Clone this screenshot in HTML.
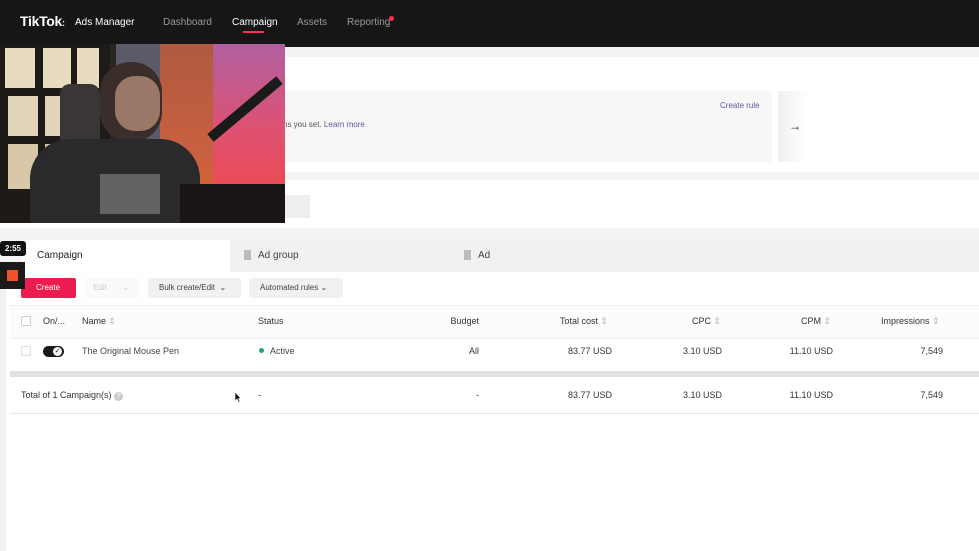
<!DOCTYPE html>
<html><head><meta charset="utf-8"><style>
*{box-sizing:border-box;margin:0;padding:0}
body{width:979px;height:551px;overflow:hidden;background:#f3f3f3;font-family:"Liberation Sans",sans-serif;position:relative;color:#222}
.a{position:absolute}
.t{position:absolute;font-size:9px;color:#333;white-space:nowrap}
.r{text-align:right}
</style></head><body>
<!-- nav -->
<div class="a" style="left:0;top:0;width:979px;height:47px;background:#161616"></div>
<div class="t" style="left:20px;top:13px;font-size:14px;font-weight:bold;color:#fff;letter-spacing:-0.3px">TikTok<span style="font-size:9px;font-weight:bold">:</span></div>
<div class="t" style="left:75px;top:17px;font-size:10px;color:#fff">Ads Manager</div>
<div class="t" style="left:163px;top:17px;font-size:10px;color:#999">Dashboard</div>
<div class="t" style="left:232px;top:17px;font-size:10px;color:#fff">Campaign</div>
<div class="a" style="left:243px;top:31px;width:21px;height:2px;background:#fe2c55"></div>
<div class="t" style="left:297px;top:17px;font-size:10px;color:#999">Assets</div>
<div class="t" style="left:347px;top:17px;font-size:10px;color:#999">Reporting</div>
<div class="a" style="left:389px;top:16px;width:5px;height:5px;border-radius:50%;background:#fe2c55"></div>

<!-- top white section -->
<div class="a" style="left:0;top:57px;width:979px;height:115px;background:#fff"></div>
<div class="a" style="left:280px;top:91px;width:492px;height:71px;background:#f7f7f8"></div>
<div class="a" style="left:778px;top:91px;width:30px;height:71px;background:linear-gradient(90deg,#f0f0f0,#fff)"></div>
<div class="t" style="left:720px;top:101px;font-size:8px;color:#5a5aa0">Create rule</div>
<div class="t" style="left:283px;top:120px;font-size:8px;color:#555">ns you set. <span style="color:#5a5aa0">Learn more</span></div>
<div class="t" style="left:789px;top:119px;font-size:12px;color:#111">→</div>
<div class="a" style="left:0;top:180px;width:979px;height:48px;background:#fff"></div>
<div class="a" style="left:280px;top:195px;width:30px;height:23px;background:#eee"></div>

<!-- tabs -->
<div class="a" style="left:230px;top:240px;width:749px;height:30px;background:#f1f1f1"></div>
<div class="a" style="left:22px;top:240px;width:208px;height:32px;background:#fff"></div>
<div class="t" style="left:37px;top:250px;font-size:10px;color:#222">Campaign</div>
<div class="a" style="left:244px;top:250px;width:7px;height:10px;background:#bbb"></div>
<div class="t" style="left:258px;top:250px;font-size:10px;color:#444">Ad group</div>
<div class="a" style="left:464px;top:250px;width:7px;height:10px;background:#bbb"></div>
<div class="t" style="left:478px;top:250px;font-size:10px;color:#444">Ad</div>

<!-- toolbar + table -->
<div class="a" style="left:6px;top:272px;width:973px;height:279px;background:#fff"></div>
<div class="a" style="left:0;top:272px;width:6px;height:279px;background:#f1f1f1"></div>
<div class="a" style="left:21px;top:278px;width:55px;height:20px;background:#ec1c4f;border-radius:2px"></div>
<div class="t" style="left:36px;top:283px;font-size:8px;color:#fff">Create</div>
<div class="a" style="left:84px;top:278px;width:56px;height:20px;background:#fafafa"></div>
<div class="t" style="left:93px;top:283px;font-size:8px;color:#ccc">Edit &nbsp;&nbsp;&nbsp;&nbsp;&nbsp;&nbsp;⌄</div>
<div class="a" style="left:148px;top:278px;width:93px;height:20px;background:#f1f1f1;border-radius:2px"></div>
<div class="t" style="left:159px;top:283px;font-size:8px;color:#444">Bulk create/Edit &nbsp;⌄</div>
<div class="a" style="left:249px;top:278px;width:94px;height:20px;background:#f1f1f1;border-radius:2px"></div>
<div class="t" style="left:260px;top:283px;font-size:8px;color:#444">Automated rules ⌄</div>
<div class="a" style="left:10px;top:305px;width:969px;height:1px;background:#eee"></div>
<div class="a" style="left:10px;top:306px;width:969px;height:32px;background:#fcfcfc"></div>
<div class="a" style="left:10px;top:338px;width:969px;height:1px;background:#eee"></div>
<div class="a" style="left:21px;top:316px;width:10px;height:10px;border:1px solid #ccc;border-radius:2px;background:#fff"></div>
<div class="t" style="left:43px;top:316px;font-size:9px">On/...</div>
<div class="t" style="left:82px;top:316px;font-size:9px">Name <span style="color:#bbb">⇕</span></div>
<div class="t" style="left:258px;top:316px;font-size:9px">Status</div>
<div class="t r" style="left:400px;width:79px;top:316px;font-size:9px">Budget</div>
<div class="t" style="left:560px;top:316px;font-size:9px">Total cost <span style="color:#bbb">⇕</span></div>
<div class="t" style="left:692px;top:316px;font-size:9px">CPC <span style="color:#bbb">⇕</span></div>
<div class="t" style="left:801px;top:316px;font-size:9px">CPM <span style="color:#bbb">⇕</span></div>
<div class="t" style="left:881px;top:316px;font-size:9px">Impressions <span style="color:#bbb">⇕</span></div>

<div class="a" style="left:21px;top:346px;width:10px;height:10px;border:1px solid #ddd;border-radius:2px"></div>
<div class="a" style="left:43px;top:346px;width:21px;height:11px;border-radius:6px;background:#1a1a1a"></div>
<div class="a" style="left:53px;top:347px;width:9px;height:9px;border-radius:50%;background:#fff;font-size:7px;line-height:9px;text-align:center;color:#111">✓</div>
<div class="t" style="left:82px;top:346px;font-size:9px;color:#444">The Original Mouse Pen</div>
<div class="a" style="left:259px;top:348px;width:5px;height:5px;border-radius:50%;background:#21a56b"></div>
<div class="t" style="left:270px;top:346px;font-size:9px;color:#444">Active</div>
<div class="t r" style="left:400px;width:79px;top:346px;font-size:9px">All</div>
<div class="t r" style="left:530px;width:82px;top:346px">83.77 USD</div>
<div class="t r" style="left:650px;width:72px;top:346px">3.10 USD</div>
<div class="t r" style="left:760px;width:73px;top:346px">11.10 USD</div>
<div class="t r" style="left:880px;width:63px;top:346px">7,549</div>

<div class="a" style="left:10px;top:371px;width:969px;height:6px;background:#e2e2e2"></div>
<div class="t" style="left:21px;top:390px;font-size:9px">Total of 1 Campaign(s) <span style="display:inline-block;width:9px;height:9px;border-radius:50%;background:#ccc;color:#fff;font-size:7px;text-align:center;line-height:9px">?</span></div>
<div class="t" style="left:258px;top:390px">-</div>
<div class="t r" style="left:400px;width:79px;top:390px">-</div>
<div class="t r" style="left:530px;width:82px;top:390px">83.77 USD</div>
<div class="t r" style="left:650px;width:72px;top:390px">3.10 USD</div>
<div class="t r" style="left:760px;width:73px;top:390px">11.10 USD</div>
<div class="t r" style="left:880px;width:63px;top:390px">7,549</div>
<div class="a" style="left:10px;top:413px;width:969px;height:1px;background:#e6e6e6"></div>
<svg class="a" style="left:234px;top:391px" width="8" height="12" viewBox="0 0 8 12"><path d="M1 1 L1 10 L3 8 L5 11.5 L6 11 L4.5 7.5 L7 7.5 Z" fill="#111" stroke="#fff" stroke-width="0.6"/></svg>

<!-- webcam -->
<div class="a" style="left:0;top:44px;width:285px;height:179px;overflow:hidden;background:#2a2422">
  <div class="a" style="left:0;top:0;width:110px;height:179px;background:#1e1a18"></div>
  <div class="a" style="left:5px;top:4px;width:30px;height:40px;background:#e8dcc0"></div>
  <div class="a" style="left:43px;top:4px;width:28px;height:40px;background:#e8dcc0"></div>
  <div class="a" style="left:77px;top:4px;width:22px;height:40px;background:#e8dcc0"></div>
  <div class="a" style="left:8px;top:52px;width:30px;height:40px;background:#e2d4b8"></div>
  <div class="a" style="left:45px;top:52px;width:26px;height:40px;background:#e2d4b8"></div>
  <div class="a" style="left:8px;top:100px;width:30px;height:45px;background:#d8c8a8"></div>
  <div class="a" style="left:45px;top:100px;width:10px;height:45px;background:#d0c0a0"></div>
  <div class="a" style="left:116px;top:0;width:44px;height:179px;background:#5a5a68"></div>
  <div class="a" style="left:160px;top:0;width:55px;height:179px;background:linear-gradient(180deg,#b05a40,#c86040 60%,#e0602a)"></div>
  <div class="a" style="left:213px;top:0;width:72px;height:179px;background:linear-gradient(180deg,#b060a0,#e05070 50%,#f04a40)"></div>
  <div class="a" style="left:60px;top:40px;width:40px;height:90px;border-radius:10px;background:#3a3636"></div>
  <div class="a" style="left:100px;top:18px;width:62px;height:80px;border-radius:30px;background:#3a2e2a"></div>
  <div class="a" style="left:115px;top:32px;width:45px;height:55px;border-radius:20px;background:#9a7868"></div>
  <div class="a" style="left:30px;top:95px;width:170px;height:90px;border-radius:40px 40px 0 0;background:#2a2a2c"></div>
  <div class="a" style="left:100px;top:130px;width:60px;height:40px;background:#8a8a8e;opacity:.6"></div>
  <div class="a" style="left:180px;top:140px;width:105px;height:40px;background:#1a1418"></div>
  <div class="a" style="left:200px;top:60px;width:90px;height:10px;background:#1a1a1a;transform:rotate(-40deg)"></div>
</div>
<div class="a" style="left:0;top:241px;width:26px;height:15px;background:#111;border-radius:3px;color:#fff;font-size:8px;font-weight:bold;line-height:15px;text-align:center">2:55</div>
<div class="a" style="left:0;top:262px;width:25px;height:27px;background:#1a1a1a"></div>
<div class="a" style="left:7px;top:270px;width:11px;height:11px;background:#f0502a"></div>
</body></html>
